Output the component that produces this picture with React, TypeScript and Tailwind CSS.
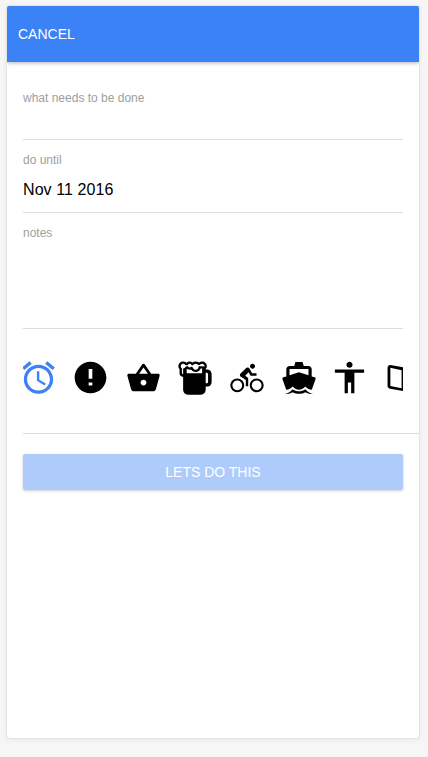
import type { ReactNode } from "react";
import {
  IoMdAlarm,
  IoMdAlert,
  IoMdBasket,
  IoMdBeer,
  IoMdBicycle,
  IoMdBoat,
  IoMdBody,
  IoMdBook,
} from "react-icons/io";

// every glyph sits in a slot of the same width, the svgs spill over it a bit
function Slot({ children }: { children: ReactNode }) {
  return <div className="flex w-[32px] shrink-0 justify-center">{children}</div>;
}

export default function App() {
  return (
    <div className="min-h-[757px] bg-[#f6f6f6] pl-[7px] pr-[9px] pt-[6px] pb-[19px] font-['Liberation_Sans',Arial,sans-serif]">
      <div className="flex h-[732px] flex-col overflow-hidden rounded-[2px] bg-white shadow-[0_0_1px_rgba(0,0,0,0.35),0_1px_6px_rgba(0,0,0,0.08)]">
        {/* header */}
        <div className="flex h-[56px] shrink-0 items-center bg-[#3b82f6] px-[11px] text-sm text-white shadow-[0_1px_4px_rgba(0,0,0,0.3)]">
          CANCEL
        </div>

        <div className="flex flex-col pl-4 pt-[29px]">
          {/* form fields */}
          <div className="mr-4">
            <div className="text-xs leading-[14px] text-[#9e9e9e]">what needs to be done</div>
            <div className="h-[35px] border-b border-[#ddd]" />

            <div className="mt-[13px] text-xs leading-[14px] text-[#9e9e9e]">do until</div>
            <div className="flex h-[46px] items-center border-b border-[#ddd] pt-[1px] text-base tracking-[0.08px] text-black">
              Nov 11 2016
            </div>

            <div className="mt-[13px] text-xs leading-[14px] text-[#9e9e9e]">notes</div>
            <div className="h-[89px] border-b border-[#ddd]" />
          </div>

          {/* icon picker */}
          <div className="h-[105px] border-b border-[#ddd]">
            <div className="flex h-[97px] w-[380px] items-center gap-[20px] overflow-hidden">
              <Slot><IoMdAlarm className="shrink-0 -translate-x-[1px] text-[#3b82f6]" size={39} /></Slot>
              <Slot><IoMdAlert className="shrink-0 -translate-x-[1px] text-black" size={39} /></Slot>
              <Slot><IoMdBasket className="shrink-0 text-black" size={37} /></Slot>
              <Slot><IoMdBeer className="shrink-0 text-black" size={38} /></Slot>
              <Slot><IoMdBicycle className="shrink-0 text-black" size={38} /></Slot>
              <Slot><IoMdBoat className="shrink-0 text-black" size={38} /></Slot>
              <Slot><IoMdBody className="-ml-[3px] shrink-0 text-black" size={39} /></Slot>
              <Slot><IoMdBook className="shrink-0 text-black" size={38} /></Slot>
            </div>
          </div>

          <button className="mt-[20px] mr-4 flex h-[36px] items-center justify-center rounded-[2px] bg-[#aecbfb] text-sm text-white shadow-[0_1px_3px_rgba(0,0,0,0.2)]">
            LETS DO THIS
          </button>
        </div>
      </div>
    </div>
  );
}
